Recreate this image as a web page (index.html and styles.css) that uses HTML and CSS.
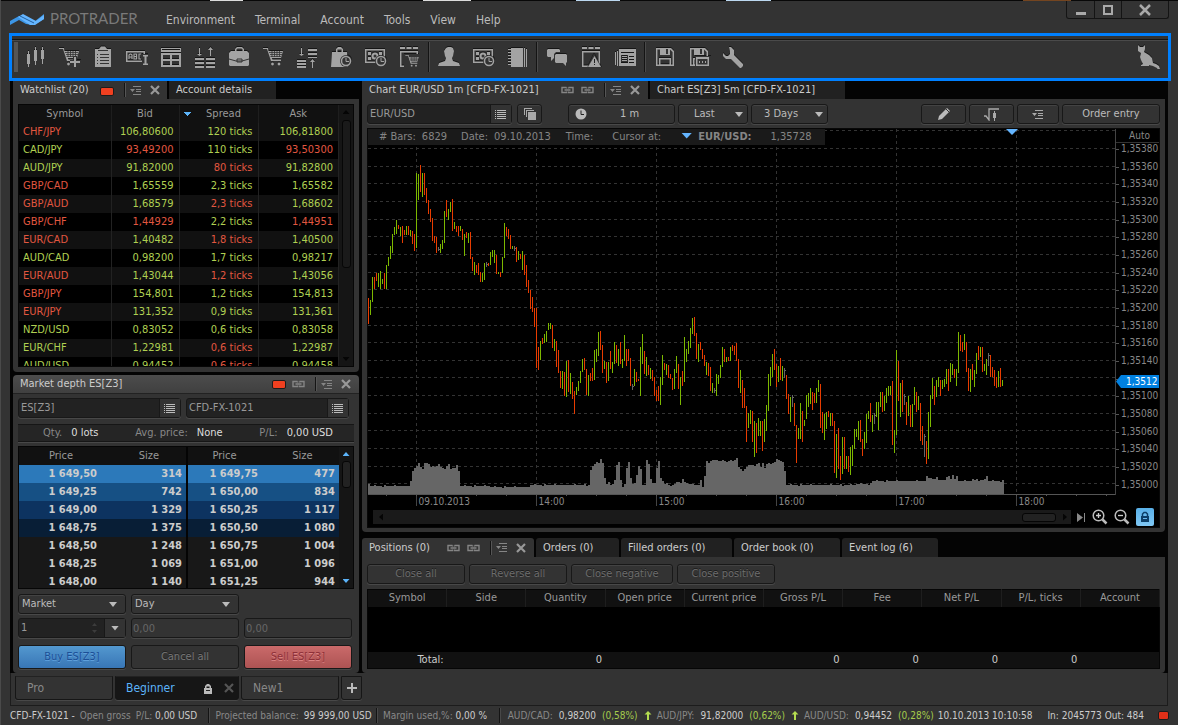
FILE: index.html
```html
<!DOCTYPE html>
<html lang="en">
<head>
<meta charset="utf-8">
<title>Protrader</title>
<link rel="stylesheet" href="styles.css">
</head>
<body>
<svg class="defs" aria-hidden="true">
  <symbol id="cart" viewBox="0 0 24 24"><path d="M2 4h4l4 12h10v-1.500H11.500l-.7-1.500H20l2-7H7.500L7 3H2z"/><path d="M8 7.500h13M9 9.500h12M9.500 11.500h10.500M11 6v6M13.500 6v6M16 6v6M18.500 6v6" stroke="#333" stroke-width=".8"/><circle cx="11.500" cy="19" r="1.400"/><circle cx="18" cy="19" r="1.400"/></symbol>
  <symbol id="clock" viewBox="0 0 12 12"><circle cx="6" cy="6" r="6" fill="#333"/><circle cx="6" cy="6" r="4.500" fill="none" stroke="#a3a3a3" stroke-width="1.500"/><path d="M6 3v3.500h3" fill="none" stroke="#a3a3a3"/></symbol>
  <symbol id="money" viewBox="0 0 24 24"><path fill-rule="evenodd" d="M2 4h20v14H2zM3.500 5.500v11h17v-11z"/><path d="M5 7h3v3H5zM16 7h3v3h-3zM5 12h3v3H5z"/><circle cx="12" cy="11" r="3.500"/><circle cx="12" cy="11" r="1.500" fill="#333"/><use href="#clock" x="12" y="10" width="12" height="12"/></symbol>
  <symbol id="cal" viewBox="0 0 24 24"><path fill-rule="evenodd" d="M3 6h18v16H3zM4.500 7.500v13h15v-13z"/><path d="M3 2h5v2H3zM9.500 2h5v2h-5zM16 2h5v2h-5z"/></symbol>
  <symbol id="link" viewBox="0 0 14 8"><path d="M6 1.500H1.500v5H6v-1M6 1.500v1M8 1.500h4.500v5H8v-1M8 1.500v1M4 4h6" fill="none" stroke="currentColor" stroke-width="1.400"/></symbol>
  <symbol id="menu" viewBox="0 0 12 9"><path d="M0 3h5L2.500 6zM3 0h8v1H3zM6 3h5v1H6zM6 5h5v1H6zM3 8h8v1H3z" fill="currentColor"/></symbol>
  <symbol id="close" viewBox="0 0 10 10"><path d="M1 1l8 8M9 1L1 9" stroke="currentColor" stroke-width="2.200"/></symbol>
  <symbol id="list" viewBox="0 0 12 9"><path d="M0 0h1v1H0zM2 0h9v1H2zM0 2h1v1H0zM2 2h9v1H2zM0 4h1v1H0zM2 4h9v1H2zM0 6h1v1H0zM2 6h9v1H2zM0 8h1v1H0zM2 8h9v1H2z" fill="currentColor"/></symbol>
  <symbol id="up" viewBox="0 0 8 9"><path d="M4 0l3.500 3.500H5V9H3V3.500H.5z" fill="#b4dc50"/></symbol>
  <symbol id="disk" viewBox="0 0 24 24"><path fill-rule="evenodd" d="M3 3h15l3 3v15H3zM4.500 4.500v15h15V7l-2.500-2.500z"/><path d="M7 3h10v7H7z"/><path d="M13 4h2v5h-2z" fill="#333"/><path fill-rule="evenodd" d="M6 13h12v8H6zM7.500 14.500v5h9v-5z"/></symbol>
</svg>

<header class="titlebar">
  <svg class="logo" viewBox="0 0 34 13" aria-hidden="true"><path d="M0 8L9 3l8 3 7 3 10-8v5L24 12l-8-1-7-4-9 5z" fill="#3c96e6"/><path d="M8 4l5-3 13 7 8-6v4l-9 6h-5z" fill="#64b5ff"/><path d="M10 3l14 7" stroke="#245f9b"/></svg>
  <span class="brand">PROTRADER</span>
  <nav class="menu"><a href="#">Environment</a><a href="#">Terminal</a><a href="#">Account</a><a href="#">Tools</a><a href="#">View</a><a href="#">Help</a></nav>
  <div class="winbtns">
    <button aria-label="Minimize"><svg width="12" height="12"><path d="M1 8h10v3H1z" fill="#aaa"/></svg></button>
    <button aria-label="Maximize"><svg width="12" height="12"><path d="M2 2h8v8H2z" fill="none" stroke="#aaa" stroke-width="2"/></svg></button>
    <button aria-label="Close" class="wide"><svg width="12" height="12"><path d="M1 1l10 10M11 1L1 11" stroke="#aaa" stroke-width="2.500"/></svg></button>
  </div>
</header>

<div class="toolbar" role="toolbar" aria-label="Panels">
  <span class="grip"></span>
  <button aria-label="Chart"><svg viewBox="0 0 24 24"><path d="M5 6h1v16H5zM4 9h3v10H4zM12 2h1v18h-1zM11 5h3v11h-3zM19 2h1v17h-1zM18 5h3v9h-3z"/></svg></button>
  <button aria-label="New order"><svg viewBox="0 0 24 24"><use href="#cart"/><path d="M16 11h4v4h4v4h-4v4h-4v-4h-3v-4h3z" fill="#333"/><path d="M17 12h2v4h4v2h-4v4h-2v-4h-4v-2h4z"/></svg></button>
  <button aria-label="Orders"><svg viewBox="0 0 24 24"><path d="M4 4h4l2-2.500h4L16 4h4v18H4z"/><path d="M7 5h10v1H7zM6 9h1v1H6zM9 9h9v1H9zM6 12h1v1H6zM9 12h9v1H9zM6 15h1v1H6zM9 15h9v1H9zM6 18h1v1H6zM9 18h9v1H9z" fill="#333"/></svg></button>
  <button aria-label="Symbol lookup"><svg viewBox="0 0 24 24"><path fill-rule="evenodd" d="M1 6h19v11H1zM2.500 7.500v8h16v-8z"/><path d="M4 14v-4l1-1h1l1 1v4M4 12h3M9 9v5h2.500V9zM9 11.500h2.500M16 9h-2v5h2" fill="none" stroke="#a3a3a3" stroke-width="1.200"/><path d="M17 9h6v12h-6z" fill="#333"/><path d="M18 10h5v1.500h-1.500v7H23V20h-5v-1.500h1.500v-7H18z"/></svg></button>
  <button aria-label="Watchlist"><svg viewBox="0 0 24 24"><path fill-rule="evenodd" d="M2 3h20v4H2zM3 4v1h18V4zM2 8h20v14H2zM4 10v4h7v-4zM13 10v4h7v-4zM4 16v4h7v-4zM13 16v4h7v-4z"/></svg></button>
  <button aria-label="Market depth"><svg viewBox="0 0 24 24"><path d="M2 13h9v2H2zM2 17h9v2H2zM2 21h9v2H2zM13 13h9v2h-9zM13 17h9v2h-9zM13 21h9v2h-9zM6 3h1v6h2l-2.500 2L4 9h2zM17 11h1V5h2l-2.500-3L15 5h2z"/></svg></button>
  <button aria-label="Portfolio"><svg viewBox="0 0 24 24"><path fill-rule="evenodd" d="M4 6h4V4l2-2h5l2 2v2h3l2 2v12l-1 1H3l-1-1V8zM9.500 6h6V4.500l-1-1h-4l-1 1z"/><path d="M2 14l7 2h6l7-2M10 14h5v3h-5z" stroke="#333" fill="none"/></svg></button>
  <button aria-label="Order entry"><svg viewBox="0 0 24 24"><use href="#cart"/></svg></button>
  <button aria-label="Time and sales"><svg viewBox="0 0 24 24"><path d="M13 4h9v2h-9zM13 8h9v2h-9zM13 12h9v1h-9zM2 15h9v2H2zM2 18h9v2H2zM2 21h9v2H2zM6 3h1v6h2l-2.500 2L4 9h2zM17 23h1v-6h2l-2.500-3L15 17h2z"/></svg></button>
  <button aria-label="Order history"><svg viewBox="0 0 24 24"><path d="M3 7h4V4l2-2h3l2 2v3h4l1 15H2zM8.500 7h4V4.500h-4z" fill-rule="evenodd"/><use href="#clock" x="11" y="10" width="12" height="12"/></svg></button>
  <button aria-label="Account history"><svg viewBox="0 0 24 24"><use href="#money"/></svg></button>
  <button aria-label="Exposure"><svg viewBox="0 0 24 24"><use href="#cal"/><path d="M7 9h15v14H7z" fill="#333"/><use href="#cart" x="7" y="8" width="16" height="16"/></svg></button>
  <i class="sep"></i>
  <button aria-label="Account"><svg viewBox="0 0 24 24"><path d="M9 3l2-1h3l2 1 1 3-1 5-1 2 1 3 6 2 1 3H1l1-3 6-2 1-3-1-2-1-5z"/></svg></button>
  <button aria-label="Balances"><svg viewBox="0 0 24 24"><use href="#money"/></svg></button>
  <button aria-label="Journal"><svg viewBox="0 0 24 24"><path d="M6 3h12v19H6zM19 3h1v19h-1zM21 4h1v18h-1zM3 4h4v1H3zM3 7h4v1H3zM3 10h4v1H3zM3 13h4v1H3zM3 16h4v1H3zM3 19h4v1H3z"/></svg></button>
  <i class="sep"></i>
  <button aria-label="Chat"><svg viewBox="0 0 24 24"><path d="M3 4h11l1 1v2h-4l-2 2v4l-3 3v-4H3l-1-1V5z"/><path d="M11 9h10l1 1v7l-1 1v3l-3-3h-7l-1-1v-7z"/></svg></button>
  <button aria-label="Alerts"><svg viewBox="0 0 24 24"><use href="#cal"/><path d="M15 8l8 15H8z" fill="#333"/><path d="M15.500 11L22 22H9z"/><path d="M15 14h1v4h-1zM15 19h1v1h-1z" fill="#222"/></svg></button>
  <button aria-label="News"><svg viewBox="0 0 24 24"><path fill-rule="evenodd" d="M6 4h17v17H6zM8 7v1h13V7zM8 10v8h7v-8zM16 11v1h5v-1zM16 14v1h5v-1zM16 17v1h5v-1z"/><path d="M9 11h5v1H9zM9 13h5v1H9zM9 15h5v1H9zM4 6h1v15H4zM2 7h1v13H2z"/></svg></button>
  <i class="sep"></i>
  <button aria-label="Save"><svg viewBox="0 0 24 24"><use href="#disk"/></svg></button>
  <button aria-label="Save as"><svg viewBox="0 0 24 24"><use href="#disk"/><path d="M8 11h16v12H8z" fill="#333"/><path fill-rule="evenodd" d="M9 12h13v9H9zM10.500 14v5.500h10V14z"/><path d="M12 16h1v2h-1zM15 16h1v2h-1zM18 16h1v2h-1z"/></svg></button>
  <button aria-label="Settings"><svg viewBox="0 0 24 24"><path d="M8 2h2l3 3v5l9 9v2l-2 2h-1l-9-9H5L2 11V8l3 3h2l2-2V6z"/></svg></button>
  <button aria-label="Mascot" class="end"><svg viewBox="0 0 24 24"><path d="M2 0l2 2h3l2-2v4L8 7l5 3 3 3 1 5 3 1 3 2 1 3-2 1-1-2-4-2-4-1v1H5v-1l2-1-2-4-1-3 1-4-3-2z"/></svg></button>
</div>

<main class="workspace">
  <div class="left">
    <section class="panel watch">
      <div class="tabs">
        <div class="tab on">Watchlist (20)<i class="led"></i><i class="bar"></i><svg class="ic m"><use href="#menu"/></svg><svg class="ic x"><use href="#close"/></svg></div>
        <div class="tab off">Account details</div>
      </div>
      <div class="body">
        <div class="tablebox">
          <table class="quotes">
            <colgroup><col class="c92"><col class="c69"><col class="c78"><col></colgroup>
            <thead><tr><th>Symbol</th><th>Bid</th><th class="sorted">Spread</th><th>Ask</th></tr></thead>
            <tbody>
              <tr><td class="r">CHF/JPY</td><td>106,80600</td><td>120 ticks</td><td>106,81800</td></tr>
              <tr><td>CAD/JPY</td><td class="r">93,49200</td><td>110 ticks</td><td class="r">93,50300</td></tr>
              <tr><td>AUD/JPY</td><td>91,82000</td><td class="r">80 ticks</td><td>91,82800</td></tr>
              <tr><td class="r">GBP/CAD</td><td>1,65559</td><td>2,3 ticks</td><td>1,65582</td></tr>
              <tr><td class="r">GBP/AUD</td><td>1,68579</td><td class="r">2,3 ticks</td><td>1,68602</td></tr>
              <tr><td class="r">GBP/CHF</td><td class="r">1,44929</td><td>2,2 ticks</td><td class="r">1,44951</td></tr>
              <tr><td class="r">EUR/CAD</td><td>1,40482</td><td class="r">1,8 ticks</td><td>1,40500</td></tr>
              <tr><td>AUD/CAD</td><td>0,98200</td><td>1,7 ticks</td><td>0,98217</td></tr>
              <tr><td class="r">EUR/AUD</td><td>1,43044</td><td class="r">1,2 ticks</td><td>1,43056</td></tr>
              <tr><td class="r">GBP/JPY</td><td>154,801</td><td>1,2 ticks</td><td>154,813</td></tr>
              <tr><td class="r">EUR/JPY</td><td>131,352</td><td>0,9 ticks</td><td>131,361</td></tr>
              <tr><td>NZD/USD</td><td>0,83052</td><td>0,6 ticks</td><td>0,83058</td></tr>
              <tr><td>EUR/CHF</td><td>1,22981</td><td class="r">0,6 ticks</td><td>1,22987</td></tr>
              <tr><td>AUD/USD</td><td>0,94452</td><td class="r">0,6 ticks</td><td>0,94458</td></tr>
            </tbody>
          </table>
          <div class="scroll"><i class="tri up"></i><i class="thumb long"></i><i class="tri down end"></i></div>
        </div>
      </div>
    </section>

    <section class="panel depth">
      <div class="caption">Market depth ES[Z3]<i class="led"></i><svg class="ic l"><use href="#link"/></svg><i class="bar"></i><svg class="ic m"><use href="#menu"/></svg><svg class="ic x"><use href="#close"/></svg></div>
      <div class="depthbody">
        <div class="pair">
          <div class="combo"><input aria-label="Instrument" value="ES[Z3]"><button aria-label="Choose instrument"><svg class="li"><use href="#list"/></svg></button></div>
          <div class="combo"><input aria-label="Account" value="CFD-FX-1021"><button aria-label="Choose account"><svg class="li"><use href="#list"/></svg></button></div>
        </div>
        <div class="summary"><span>Qty. <b>0 lots</b></span><span>Avg. price: <b>None</b></span><span>P/L: <b>0,00 USD</b></span></div>
        <div class="tablebox">
          <table class="book">
            <colgroup><col class="c93"><col class="c76"><col class="c78"><col></colgroup>
            <thead><tr><th>Price</th><th>Size</th><th>Price</th><th>Size</th></tr></thead>
            <tbody>
              <tr class="d1"><td>1 649,50</td><td>314</td><td>1 649,75</td><td>477</td></tr>
              <tr class="d2"><td>1 649,25</td><td>742</td><td>1 650,00</td><td>834</td></tr>
              <tr class="d3"><td>1 649,00</td><td>1 329</td><td>1 650,25</td><td>1 117</td></tr>
              <tr class="d4"><td>1 648,75</td><td>1 375</td><td>1 650,50</td><td>1 080</td></tr>
              <tr><td>1 648,50</td><td>1 248</td><td>1 650,75</td><td>1 004</td></tr>
              <tr><td>1 648,25</td><td>1 069</td><td>1 651,00</td><td>1 096</td></tr>
              <tr><td>1 648,00</td><td>1 140</td><td>1 651,25</td><td>944</td></tr>
            </tbody>
          </table>
          <div class="scroll blue"><i class="tri up"></i><i class="thumb short"></i><i class="tri down end"></i></div>
        </div>
        <div class="form">
          <label class="sel"><select aria-label="Order type"><option>Market</option></select></label>
          <label class="sel"><select aria-label="Validity"><option>Day</option></select></label>
          <span></span>
          <div class="combo qty"><input aria-label="Quantity" value="1"><span class="spin"><i class="tri up"></i><i class="tri down"></i></span><button aria-label="Quantity presets"><i class="arrow"></i></button></div>
          <input class="dis" aria-label="Limit price" value="0,00" disabled>
          <input class="dis" aria-label="Stop price" value="0,00" disabled>
          <button class="big buy">Buy ES[Z3]</button><button class="big cancel" disabled>Cancel all</button><button class="big sell">Sell ES[Z3]</button>
        </div>
      </div>
    </section>
  </div>

  <div class="right">
    <section class="panel chart">
      <div class="tabs">
        <div class="tab on charttab">Chart EUR/USD 1m [CFD-FX-1021]<span class="push"></span><svg class="ic l"><use href="#link"/></svg><svg class="ic l"><use href="#link"/></svg><i class="bar"></i><svg class="ic m"><use href="#menu"/></svg><svg class="ic x"><use href="#close"/></svg></div>
        <div class="tab off t195">Chart ES[Z3] 5m [CFD-FX-1021]</div>
      </div>
      <div class="body">
        <div class="charttools">
          <div class="combo sym"><input aria-label="Symbol" value="EUR/USD"><button aria-label="Choose symbol"><svg class="li"><use href="#list"/></svg></button></div>
          <button class="btn w25" aria-label="Overlay"><svg width="12" height="12"><path d="M0 0h8v1H1v6H0zM2 2h8v1H3v6H2zM4 4h8v8H4z" fill="#aaa"/></svg></button>
          <button class="btn period"><svg width="12" height="12"><circle cx="6" cy="6" r="5.500" fill="#bbb"/><path d="M6 2.500V6.500h3" fill="none" stroke="#222"/></svg><span>1 m</span></button>
          <label class="sel last"><select aria-label="Price type"><option>Last</option></select></label>
          <label class="sel days"><select aria-label="Range"><option>3 Days</option></select></label>
          <span class="push"></span>
          <button class="btn w45" aria-label="Draw"><svg width="14" height="14"><path d="M1 13l1-4 8-8 3 3-8 8z" fill="#bbb"/><path d="M9 2l3 3" stroke="#333"/></svg></button>
          <button class="btn w45" aria-label="Indicators"><svg width="16" height="13"><path d="M0 8h2l3 4V1h10" fill="none" stroke="#aaa" stroke-width="1.300"/><path d="M10 3h1v10h-1zM9 5h3v5H9z" fill="#aaa"/></svg></button>
          <button class="btn w42" aria-label="Chart menu"><svg class="ic m bright"><use href="#menu"/></svg></button>
          <button class="btn w98">Order entry</button>
        </div>
        <div class="screen">
          <div class="plotrow">
            <svg class="plot" id="plot" role="img" aria-label="EUR/USD one minute price bars with volume"></svg>
            <div class="info"><span># Bars:</span><span>6829</span><span class="g13">Date:</span><span>09.10.2013</span><span class="g15">Time:</span><span class="g19">Cursor at:</span><i class="arrow bluea"></i><b>EUR/USD:</b><span class="g19">1,35728</span></div>
            <i class="marker"></i>
            <div class="axis"><div class="auto">Auto</div><div class="prices" id="prices"></div><div class="tag">1,3512</div></div>
          </div>
          <div class="scrollrow">
            <div class="hscroll"><i class="ht lt"></i><span class="push"></span><i class="hthumb"></i><i class="ht rt"></i></div>
            <svg width="9" height="11"><path d="M0 1l6 4.500L0 10zM7 1h1v9H7z" fill="#888"/></svg>
            <svg width="16" height="16"><circle cx="6.500" cy="6.500" r="5.300" fill="none" stroke="#bbb" stroke-width="1.500"/><path d="M4 6.500h5M6.500 4v5" stroke="#ccc" stroke-width="1.300"/><path d="M10.500 10.500l4 4" stroke="#bbb" stroke-width="2.500"/></svg>
            <svg width="16" height="16"><circle cx="6.500" cy="6.500" r="5.300" fill="none" stroke="#bbb" stroke-width="1.500"/><path d="M4 6.500h5" stroke="#ccc" stroke-width="1.300"/><path d="M10.500 10.500l4 4" stroke="#bbb" stroke-width="2.500"/></svg>
            <button class="lockbtn" aria-label="Lock scale"><svg width="10" height="12"><path d="M1 5h8v6H1z" fill="#0d3f68"/><path d="M2.500 5V3L4 1.500h2L7.500 3v2" fill="none" stroke="#0d3f68" stroke-width="1.500"/><path d="M3 7h4v1H3z" fill="#6bb8ee"/></svg></button>
          </div>
        </div>
      </div>
    </section>

    <section class="panel positions">
      <div class="tabs ptabs">
        <div class="tab on postab">Positions (0)<span class="push"></span><svg class="ic l"><use href="#link"/></svg><svg class="ic l"><use href="#link"/></svg><i class="bar"></i><svg class="ic m"><use href="#menu"/></svg><svg class="ic x"><use href="#close"/></svg></div>
        <div class="tab off t83">Orders (0)</div><div class="tab off t111">Filled orders (0)</div><div class="tab off t106">Order book (0)</div><div class="tab off t96">Event log (6)</div>
      </div>
      <div class="body">
        <div class="actions"><button class="btn" disabled>Close all</button><button class="btn" disabled>Reverse all</button><button class="btn" disabled>Close negative</button><button class="btn" disabled>Close positive</button></div>
        <table class="pos">
          <thead><tr><th>Symbol</th><th>Side</th><th>Quantity</th><th>Open price</th><th>Current price</th><th>Gross P/L</th><th>Fee</th><th>Net P/L</th><th>P/L, ticks</th><th>Account</th></tr></thead>
          <tbody><tr><td colspan="10"></td></tr></tbody>
          <tfoot><tr><td>Total:</td><td></td><td>0</td><td></td><td></td><td>0</td><td>0</td><td>0</td><td>0</td><td></td></tr></tfoot>
        </table>
      </div>
    </section>
  </div>
</main>

<div class="spaces">
  <button class="space">Pro</button>
  <div class="space on"><span>Beginner</span><svg width="10" height="11"><path d="M1 5h8v6H1zM2 5V3l2-2h2l2 2v2H6.500V3.500h-3V5z" fill="#bbb"/><path d="M3 7.500h4" stroke="#222"/></svg><svg class="ic x"><use href="#close"/></svg></div>
  <button class="space">New1</button>
  <button class="plus" aria-label="Add workspace"><svg width="10" height="10"><path d="M4 0h2v4h4v2H6v4H4V6H0V4h4z" fill="#bbb"/></svg></button>
</div>

<footer class="status">
  <div class="seg acct"><b>CFD-FX-1021 -</b><span>Open gross</span><span>P/L: <b>0,00 USD</b></span></div>
  <div class="seg bal"><span>Projected balance:</span><b>99 999,00 USD</b></div>
  <div class="seg margin"><span>Margin used,%: <b>0,00 %</b></span></div>
  <div class="seg ticks">
    <div><span>AUD/CAD:</span><b>0,98200</b><em>(0,58%)</em><svg width="8" height="9"><use href="#up"/></svg></div>
    <div><span>AUD/JPY:</span><b>91,82000</b><em>(0,62%)</em><svg width="8" height="9"><use href="#up"/></svg></div>
    <div><span>AUD/USD:</span><b>0,94452</b><em>(0,28%)</em></div>
  </div>
  <b class="time">10.10.2013 10:10:58</b>
  <b class="net">In: 2045773 Out: 484</b>
  <i class="led"></i>
</footer>
<script src="chart.js"></script>
</body>
</html>
```
FILE: styles.css
```css
* { box-sizing: border-box; }
html { height: 100%; }
body {
  margin: 0; height: 100%; min-height: 700px; overflow: hidden;
  display: flex; flex-direction: column;
  background: #333; color: #ccc;
  font: 11px/16px "DejaVu Sans Condensed", "Noto Sans", sans-serif;
  border-left: 1px solid #4a4a4a;
}
button, input, select { font: inherit; color: inherit; margin: 0; padding: 0; border: 0; border-radius: 0; background: none; outline: 0; min-width: 0; }
button { cursor: pointer; }
i { display: block; flex: none; }
b { font-weight: normal; }
svg { flex: none; display: block; }
table { border-collapse: collapse; border-spacing: 0; table-layout: fixed; }
.defs { position: absolute; width: 0; height: 0; }
.push { flex: 1; }

/* Title bar */
.titlebar {
  height: 33px; display: flex; align-items: flex-start; padding-left: 9px;
  background: linear-gradient(90deg, #080808 209px, #ddd 209px 242px, #080808 242px 422px, #ddd 422px 470px, #080808 470px 575px, #bcd8f0 575px 619px, #080808 619px 725px, #bcd8f0 725px 770px, #080808 770px 1022px, #744520 1022px 1070px, #080808 1070px) top / 100% 1px no-repeat;
}
.logo { width: 34px; height: 13px; margin-top: 13px; }
.brand { font: 15px/20px Lato, sans-serif; color: #7a7a7a; margin: 8px 0 0 6px; width: 87px; }
.menu { display: flex; gap: 20px; margin: 11px 0 0 29px; font-size: 12px; line-height: 18px; }
.menu a { color: #bbb; text-decoration: none; }
.winbtns { margin: 1px 9px 0 auto; display: flex; border: 1px solid #141414; border-top: 0; border-radius: 0 0 3px 3px; }
.winbtns button { width: 27px; height: 17px; display: grid; place-items: center; border-left: 1px solid #141414; }
.winbtns button:first-child { border-left: 0; }
.winbtns .wide { width: 47px; }

/* Toolbar */
.toolbar {
  height: 48px; margin: 0 7px 0 8px; border: 3px solid #0080ff; display: flex; align-items: center;
  position: relative; z-index: 1; padding: 0 3px 0 2px; background: linear-gradient(#141414 1px, #4a4a4a 1px 2px, #333 2px) 0 3px / 100% 100% no-repeat;
}
.grip { width: 4px; height: 30px; background: radial-gradient(circle at 1px 1px, #777 1px, transparent 1px) 0 0 / 2px 2px; opacity: .5; }
.toolbar button { width: 34px; height: 36px; display: grid; place-items: center; margin: 0; }
.toolbar svg { width: 24px; height: 24px; fill: #a3a3a3; filter: drop-shadow(0 -1px 0 #161616); }
.toolbar .end { margin-left: auto; }
.sep { width: 2px; height: 30px; margin: 0 2px; border-left: 1px solid #141414; border-right: 1px solid #4a4a4a; }

/* Workspace */
.workspace {
  flex: 1; min-height: 0; margin: 0 10px 0 9px; background: #040404; padding: 0 3px;
  display: grid; grid-template-columns: 346px minmax(0, 1fr); gap: 3px;
}
.left, .right { display: flex; flex-direction: column; min-height: 0; }
.left { gap: 3px; }
.right { gap: 6px; }
.panel { display: flex; flex-direction: column; min-height: 0; }
.watch, .chart { flex: 1; }
.tabs { height: 18px; display: flex; gap: 2px; }
.tab { display: flex; align-items: center; padding: 0 7px; color: #ccc; white-space: nowrap; }
.tab.on { background: #333; }
.tab.off { background: #212121; }
.watch .on { width: 154px; }
.watch .off { width: 107px; }
.charttab { width: 286px; }
.t195 { width: 195px; }
.ptabs { height: 19px; }
.ptabs .tab { border-radius: 3px 3px 0 0; }
.postab { width: 172px; }
.t83 { width: 83px; } .t111 { width: 111px; } .t106 { width: 106px; } .t96 { width: 96px; }
.body { flex: 1; min-height: 0; display: flex; flex-direction: column; background: #333; padding: 5px; border-radius: 0 0 4px 4px; }
.led { width: 14px; height: 9px; background: #f04020; border: 1px solid #1c1c1c; border-radius: 2px; }
.tab .led { margin: 2px 10px 0 auto; }
.bar { width: 2px; height: 14px; border-left: 1px solid #141414; border-right: 1px solid #555; }
.ic { color: #858585; overflow: visible; }
.ic.m { width: 12px; height: 9px; margin: 0 8px 0 4px; }
.ic.x { width: 10px; height: 10px; color: #999; }
.ic.l { width: 15px; height: 8px; margin-right: 5px; }
.ic.l + .bar { margin-left: 4px; }
.ic.bright { margin: 0; color: #aaa; }
.charttab, .postab { padding-right: 8px; }
.tablebox { display: flex; min-height: 0; overflow: hidden; border: 1px solid #060606; background: #111; }
.watch .tablebox { flex: 1; }
.scroll { width: 14px; flex: none; background: #151515; display: flex; flex-direction: column; align-items: center; padding: 5px 0; }
.scroll .end { margin-top: auto; }
.tri { width: 7px; height: 4px; background: #050505; }
.tri.up { clip-path: polygon(50% 0, 100% 100%, 0 100%); }
.tri.down { clip-path: polygon(0 0, 100% 0, 50% 100%); }
.blue .tri { background: #5cb4fa; }
.thumb { width: 9px; margin-top: 6px; border: 1px solid #060606; border-radius: 3px; background: #1a1a1a; }
.thumb.long { height: 148px; }
.thumb.short { height: 27px; margin-top: 5px; background: #222; }

.quotes, .book { flex: 1; width: 0; height: max-content; }
.c92 { width: 92px; } .c93 { width: 93px; } .c69 { width: 68px; } .c78 { width: 79px; } .c76 { width: 75px; }
th { font-weight: normal; color: #999; height: 18px; padding: 0; line-height: 16px; }
.quotes th { background: #111; border-right: 1px solid #1e1e1e; }
.quotes td { height: 18px; line-height: 16px; padding: 0 5px 0 0; text-align: right; color: #b0d052; border-right: 1px solid #222; }
.quotes td:first-child { text-align: left; padding: 0 0 0 4px; }
.quotes tbody tr:nth-child(odd) { background: #111; }
.quotes tbody tr { background: #000; }
.quotes td.r { color: #e25740; }
.sorted { background: conic-gradient(from -45deg at 50% 100%, #5cb4fa 90deg, transparent 0) 4px 7px / 7px 4px no-repeat #111 !important; padding-left: 10px; }

/* Market depth */
.caption { height: 19px; padding: 0 8px 0 7px; display: flex; align-items: center; background: linear-gradient(#4c4c4c, #404040); border-radius: 4px 4px 0 0; border-bottom: 1px solid #222; }
.caption .led { margin: 0 5px 0 auto; }
.depthbody { background: #333; padding: 4px 5px; border-radius: 0 0 4px 4px; }
.pair { display: grid; grid-template-columns: 163px 163px; gap: 5px; }
.combo { display: flex; height: 20px; border: 1px solid #181818; border-radius: 3px; background: #222; box-shadow: 0 1px 0 #484848; color: #999; }
.combo input { flex: 1; padding: 0 2px; width: 0; }
.combo button { width: 21px; display: grid; place-items: center; background: #333; border-left: 1px solid #181818; color: #bbb; }
.li { width: 12px; height: 9px; }
.summary { margin: 6px 0 4px; height: 18px; background: #252525; border-top: 1px solid #161616; border-bottom: 1px solid #161616; box-shadow: 0 1px 0 #484848; display: flex; align-items: center; padding: 0 21px 0 25px; justify-content: space-between; color: #888; }
.summary b { color: #ddd; margin-left: 6px; }
.book tr { background: #181818; }
.book thead tr { background: #111; }
.book th:first-child { padding-right: 9px; }
.book th:nth-child(3) { padding-right: 5px; }
.book td { height: 18px; line-height: 16px; padding: 0 4px 0 0; text-align: right; font-weight: bold; color: #ccc; }
.book td:first-child { padding-right: 15px; }
.book td:nth-child(3) { padding-right: 8px; }
.book td:nth-child(2), .book th:nth-child(2) { border-right: 2px solid #040404; }
.book tr.d1 { background: #2c79ba; }
.book tr.d2 { background: #165084; }
.book tr.d3 { background: #0d3360; }
.book tr.d4 { background: #081e36; }
.depth .tablebox { height: 143px; }
.form { margin-top: 5px; display: grid; grid-template-columns: 108px 108px 108px; gap: 4px 5px; }
.sel { position: relative; height: 20px; display: block; border: 1px solid #181818; border-radius: 3px; background: #333; box-shadow: 0 1px 0 #484848, inset 0 1px 0 #434343; }
.sel select { width: 100%; height: 18px; appearance: none; padding-left: 3px; color: #bbb; }
.sel::after, .arrow { content: ""; width: 8px; height: 5px; background: #bbb; clip-path: polygon(0 0, 100% 0, 50% 100%); }
.sel::after { position: absolute; right: 8px; top: 7px; pointer-events: none; }
.spin { width: 12px; display: flex; flex-direction: column; justify-content: space-evenly; }
.spin .tri { background: #3c3c3c; width: 5px; height: 3px; }
.dis { height: 20px; width: 100%; border: 1px solid #181818; border-radius: 3px; box-shadow: 0 1px 0 #484848; color: #666; padding: 0 1px; }
.big { height: 24px; margin-top: 3px; border: 1px solid #181818; border-radius: 3px; box-shadow: 0 1px 0 #484848; text-shadow: 0 -1px 0 #0006; }
.buy { background: linear-gradient(#5398cf, #3876b6); color: #1c4f96; text-shadow: 0 1px 0 #5fa0dc; }
.sell { background: linear-gradient(#ca6a6a, #ad5353); color: #8e3038; text-shadow: 0 1px 0 #dc8484; }
.cancel { color: #777; }

/* Chart */
.btn { height: 20px; border: 1px solid #181818; border-radius: 3px; background: #333; box-shadow: 0 1px 0 #484848, inset 0 1px 0 #434343; color: #bbb; display: flex; align-items: center; justify-content: center; }
.btn:disabled { color: #6c6c6c; text-shadow: 0 -1px 0 #1a1a1a; }
.charttools { display: flex; gap: 3px; margin-bottom: 4px; }
.sym { width: 145px; margin-right: 2px; }
.w25 { width: 25px; margin-right: 23px; }
.w45 { width: 45px; } .w42 { width: 42px; } .w98 { width: 98px; }
.period { width: 107px; justify-content: flex-start; padding-left: 6px; }
.period span { flex: 1; padding-right: 2px; }
.last { width: 70px; } .last select { padding-left: 15px; }
.days { width: 77px; } .days select { padding-left: 12px; }
.last::after, .days::after { right: 4px; }
.screen { flex: 1; min-height: 0; background: #000; border: 1px solid #080808; display: flex; flex-direction: column; }
.plotrow { flex: 1; min-height: 0; display: flex; position: relative; }
.plot { flex: 1; width: 0; height: 378px; }
.plot text { font-size: 10px; fill: #888; }
.info { position: absolute; left: 0; top: 0; height: 16px; width: 457px; background: #1a1a1a; color: #858585; display: flex; align-items: center; padding-left: 11px; gap: 6px; white-space: nowrap; }
.info b { font-weight: bold; }
.info .g13 { margin-left: 8px; } .info .g15 { margin-left: 9px; } .info .g19 { margin-left: 13px; }
.bluea { background: #64b5ff; width: 11px; height: 6px; margin: 0 0 3px 14px; }
.marker { position: absolute; left: 638px; top: 0; width: 12px; height: 6px; background: #64b5ff; clip-path: polygon(0 0, 100% 0, 50% 100%); }
.axis { width: 44px; position: relative; font-size: 10px; color: #888; height: 366px; border-left: 1px solid #444; }
.auto { height: 14px; line-height: 13px; text-align: center; border-bottom: 1px solid #333; padding-left: 4px; }
.prices { display: flex; flex-direction: column; justify-content: space-between; height: 348px; padding-left: 5px; }
.prices div { height: 12px; line-height: 12px; position: relative; }
.prices div::before { content: ""; position: absolute; left: -5px; top: 6px; width: 3px; height: 1px; background: #555; }
.tag { position: absolute; left: 0; top: 246px; width: 43px; height: 13px; line-height: 13px; background: #0080e0; color: #fff; padding-left: 10px; clip-path: polygon(5px 0, 100% 0, 100% 100%, 5px 100%, 0 50%); }
.scrollrow { height: 20px; display: flex; align-items: center; gap: 6px; padding: 0 5px 0 5px; }
.hscroll { flex: 1; height: 14px; background: #1a1a1a; display: flex; align-items: center; gap: 7px; padding: 0 4px 0 6px; }
.hthumb { width: 34px; height: 9px; border: 1px solid #050505; border-radius: 3px; background: #222; }
.ht { width: 4px; height: 7px; background: #050505; }
.ht.lt { clip-path: polygon(100% 0, 100% 100%, 0 50%); }
.ht.rt { clip-path: polygon(0 0, 100% 50%, 0 100%); }
.lockbtn { width: 18px; height: 18px; display: grid; place-items: center; background: linear-gradient(#59b0e8, #80c8f5); border-radius: 2px; }
.chart .body { padding-bottom: 4px; }

/* Positions */
.positions { flex: none; }
.actions { display: grid; grid-template-columns: 98px 98px 102px 98px; gap: 4px; margin: 2px 0 5px; }
.positions .body { padding-bottom: 4px; }
.pos { width: 100%; background: #111; border: 1px solid #060606; }
.pos th { height: 17px; border-right: 1px solid #1e1e1e; }
.pos tbody td { height: 45px; background: #000; }
.pos tfoot td { height: 17px; line-height: 16px; text-align: right; padding: 0 3px 0 0; color: #ccc; }

/* Workspace tabs and status */
.spaces { height: 33px; margin: 0 10px 0 9px; padding: 3px 4px 0; display: flex; gap: 2px; align-items: flex-start; border-bottom: 1px solid #1c1c1c; border-left: 1px solid #1c1c1c; border-right: 1px solid #1c1c1c; }
.space { width: 98px; height: 24px; border: 1px solid #161616; border-top-color: #222; border-radius: 0 0 3px 3px; box-shadow: 0 1px 0 #484848; color: #888; text-align: left; padding: 0 11px; font-size: 12px; }
.space.on { width: 124px; background: #161616; color: #5cb4fa; display: flex; align-items: center; padding: 0 4px 0 10px; }
.space.on span { flex: 1; }
.space .x { margin-left: 11px; color: #555; }
.plus { width: 21px; height: 24px; border: 1px solid #161616; border-radius: 0 0 3px 3px; display: grid; place-items: center; box-shadow: 0 1px 0 #484848; }
.status { height: 19px; padding: 0 9px; display: flex; align-items: center; font-size: 10px; color: #888; white-space: nowrap; }
.status b { color: #ccc; }
.status em { font-style: normal; color: #a5cc4c; }
.seg { display: flex; align-items: center; gap: 5px; height: 15px; }
.seg + .seg { border-left: 1px solid #141414; box-shadow: inset 1px 0 0 #484848; padding-left: 6px; }
.acct { width: 199px; } .bal { width: 168px; } .margin { width: 123px; }
.seg.ticks { flex: 1; justify-content: space-between; padding-left: 8px; }
.ticks div { display: flex; align-items: center; gap: 6px; }
.time { margin-left: 4px; }
.net { margin-left: 15px; }
.status > .led { margin-left: 14px; width: 11px; background: #e03018; }
```
FILE: chart.js
```js
// Price bars: direction, high and low, in thirds of a pixel from the segment's base line.
const segments = [
  { base: -27, bars: `R534-612 G540-585 G471-546 R471-507 R459-483 G459-501 G453-507 G477-492 R459-507 G435-507 G411-438 G378-417 G342-399 G321-345 G300-342 R315-327 G321-348 R318-369 R330-345 G318-345 R318-345 G330-348 R333-372 R342-393 G159-384 G162-240 R135-216 G159-231 R159-225 R204-249 R240-282 R267-306 R294-363 R348-369 R351-399 N380-392 G372-399 G360-387 G273-369 R240-291 G267-300 G246-276 R237-333 G306-327 R318-336 R318-348 G318-333 R327-360 G342-408 R336-354 G339-369 R336-417 R411-453 G426-465 R435-459 R429-465 R456-486 G459-486 G429-480 N426-440 R429-438 G396-435 G390-411 G390-429 R405-462 G456-462 R456-471 G411-459 G309-414 R321-348 R327-357 R345-387 G378-387 N378-392 R381-426 G393-420 R402-417 G393-450 R405-465 R435-501 R480-519 R510-567 R531-576 R564-621 R564-744 R681-750 G663-720 R654-672 G642-669 G633-666 G609-630 G609-627 R615-684 G657-693 R663-741 R690-759 R753-804 G753-807 R756-828 G723-831 R720-816 G759-822 R786-837 R813-882 G801-825 G783-813 G753-789 G717-756 R714-750 R747-825 G765-828 R759-783 R744-783 G690-780 G687-726 G636-708 R633-690 R675-759 G723-747 R726-789 G726-783 R693-747 G726-759 G666-732 R675-729 G687-738` },
  { base: 453, bars: `R186-252 G237-264 G165-243 R207-258 R207-243 R234-318 N312-330 G267-318 R276-306 R297-303 G201-348 G162-252 R213-282 G231-288 R255-285 G264-297 R270-303 R291-348 R330-363 R318-363 G291-375 G225-315 R249-270 G252-285 R255-294 R282-297 R294-330 G267-327 G228-279 R252-327 G291-375 R273-318 G171-306 G207-246 G183-222 G144-204 G114-162 R111-168 R159-237 G192-246 R186-210 R207-237 R225-258 G246-285 R249-288 R261-333 G309-339 N324-338 G282-348 G285-312 G255-294 G201-261 R207-246 G231-246 R231-243 G201-243 R195-213 R198-225 R189-243 R237-324 G270-339 R300-384 R324-384 R378-486 G399-444 G390-432 R393-486 G423-531 R429-519 G414-468 G423-468 R423-513 G417-486 G375-453 G282-393 G261-318 G222-291 R207-270 R252-321 G258-306 R234-300 G258-303 N264-294 R285-357 R342-402 G351-426 N345-380 R369-438 R435-549 G444-477 G369-477 R393-486 G420-438 G345-417 G339-381 G324-372 R336-390 R339-369 G324-369 G300-336 R312-444 R396-459 G402-480 G396-447 R393-411 G399-438 R399-438 R423-579 G462-594 R444-567 R528-600 G471-582 R471-567 G528-567 R528-576 G501-585 G495-558 G447-507 G447-471 G423-480` },
  { base: 453, bars: `R420-486 R477-528 G456-507 G402-489 G393-417 R369-426 G405-456 N399-432 G366-411 G366-450 G336-381 R336-396 G348-393 G324-369 G318-348 G318-345 R303-495 G450-519 G210-465 R243-363 G309-411 R300-396 N342-375 R366-435 G348-408 R375-441 G372-441 G321-375 R336-396 G348-390 R369-483 R438-495 N462-531 R483-552 G396-537 G345-441 G294-357 R318-375 G300-351 G291-321 R300-348 G300-327 G297-321 G267-312 R267-333 G249-306 G252-285 R267-294 G267-318 G156-279 R165-213 R186-216 G162-210 R186-276 R264-333 G267-336 R252-300 G270-321 G219-282 R198-240 G201-231 R201-276 G252-273 G237-285 N219-258 R225-291 R261-291 R270-318 R291-324 G273-321 R264-321 G300-318` }
];
// Volume heights in pixels, one per bar.
const calm = (n, h) => Array.from({ length: n }, (_, i) => h + (i * 7 % 5 > 3 ? 1 : 0) - (i % 11 === 6 ? 1 : 0));
const volume = [
  10, ...calm(20, 8), 13, 23, 26, 28, 31, 27, 25, 31, 31, 30, 27, 28, 27, 28, 30, 27, 26, 25, 28, 30, 25, 26, 26, 29, 23,
  ...calm(15, 8), ...calm(20, 7), ...calm(30, 9), 24, 28, 30, 32, 31,
  35, 31, 16, 10, 12, 9, 10, 14, 29, 32, 14, 7, 10, 26, 32, 16, 10, 11, 19, 28, 25, 9, 9, 34, 30, 15, 11, 11, 26, 33, 16, 13,
  10, 11, 9, 8, 9, 10, 12, 12, 11, 15, 12, 11, 10, 10, 10, 9, 9, 9, 14, 7, 18, 33, 31, 33, 34, 34, 34, 33, 33, 34, 33, 32, 33, 34, 33, 34, 36,
  27, 25, 23, 25, 27, 29, 29, 29, 28, 30, 31, 27, 31, 26, 30, 31, 30, 31, 32, 35, 34, 33, 32, 23,
  ...calm(35, 9), ...calm(8, 10), ...calm(27, 13), 18, 16, 16, 15, 15, 17, 14, 14, 14, 14, 17, 18, 15, 19, 15, 18, 13, ...calm(6, 13),
  15, 14, 15, 13, 14, 14, 15, 18, ...calm(14, 13)
];
const colors = { R: '#e83c00', G: '#7cb800', N: '#666' };
const base = 365;
let out = '';
for (let i = 0; i < 20; i++) {
  const y = Math.round(19 + i * 17.65) + 0.5;
  out += `<line x1="0" x2="100%" y1="${y}" y2="${y}" stroke="#333" stroke-dasharray="3 3"/>`;
}
out += '<line x1="0" x2="100%" y1="1.500" y2="1.500" stroke="#333" stroke-dasharray="3 3"/>';
['09.10.2013', '14:00', '15:00', '16:00', '17:00', '18:00'].forEach((label, i) => {
  const x = 48.5 + i * 120;
  out += `<line x1="${x}" x2="${x}" y1="0" y2="${base}" stroke="#333" stroke-dasharray="3 3"/>`;
  out += `<line x1="${x}" x2="${x}" y1="${base}" y2="377" stroke="#444"/><text x="${x + 2}" y="376">${label}</text>`;
});
for (let x = 18.5; x < 748; x += 30) out += `<line x1="${x}" x2="${x}" y1="${base}" y2="367" stroke="#555"/>`;
let k = 0;
for (const s of segments) {
  for (const b of s.bars.split(' ')) {
    const [hi, lo] = b.slice(1).split('-').map(v => Math.round((+v + s.base) / 3));
    out += `<rect x="${k * 2}" y="${hi}" width="1" height="${lo - hi}" fill="${colors[b[0]]}"/>`;
    if (b[0] === 'N') out += `<rect x="${k * 2}" y="${hi + 2}" width="2" height="1" fill="#666"/>`;
    k++;
  }
}
volume.slice(0, k).forEach((h, i) => {
  out += `<rect x="${i * 2}" y="${base - h}" width="2" height="${h}" fill="#666" shape-rendering="crispEdges"/>`;
});
out += `<line x1="0" x2="100%" y1="${base + 0.5}" y2="${base + 0.5}" stroke="#555"/>`;
document.getElementById('plot').innerHTML = out;
// The row under the current price tag carries no label.
document.getElementById('prices').innerHTML =
  Array.from({ length: 20 }, (_, i) => `<div>${i === 13 ? '' : `1,${35380 - i * 20}`}</div>`).join('');
```
